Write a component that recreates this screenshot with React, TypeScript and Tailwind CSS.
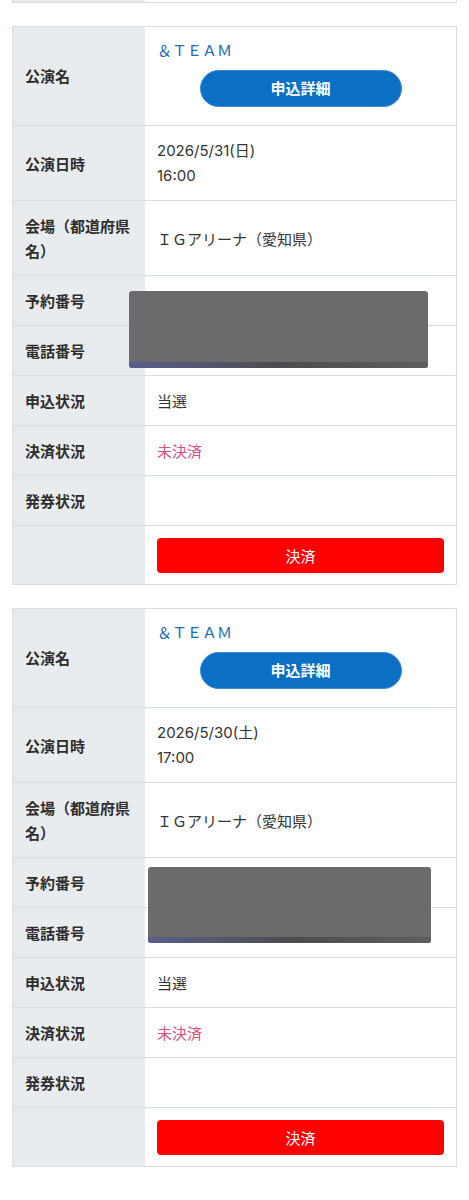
import React from 'react';

type Ticket = {
  title: string;
  date: string;
  time: string;
  venue: string;
  status: string;
  payment: string;
  mask: { left: number; top: number; width: number; height: number };
};

const tickets: Ticket[] = [
  {
    title: '＆ＴＥＡＭ',
    date: '2026/5/31(日)',
    time: '16:00',
    venue: 'ＩＧアリーナ（愛知県）',
    status: '当選',
    payment: '未決済',
    mask: { left: 116, top: 264, width: 299, height: 77 },
  },
  {
    title: '＆ＴＥＡＭ',
    date: '2026/5/30(土)',
    time: '17:00',
    venue: 'ＩＧアリーナ（愛知県）',
    status: '当選',
    payment: '未決済',
    mask: { left: 135, top: 258, width: 283, height: 76 },
  },
];

const Row: React.FC<{ label?: string; h: string; children?: React.ReactNode; last?: boolean }> = ({ label, h, children, last }) => (
  <div className={`grid grid-cols-[132px_1fr] ${last ? '' : 'border-b border-[#d8dfe3]'} ${h}`}>
    <div className="bg-[#e9ecee] px-3 flex items-center font-bold text-[15px] leading-[25px] text-[#2e2e2e]">
      {label}
    </div>
    <div className="px-3 flex items-center text-[15px] leading-[25px] text-[#333]">{children}</div>
  </div>
);

const TicketTable: React.FC<{ t: Ticket }> = ({ t }) => (
  <div className="relative border border-[#d8dfe3]">
    <div className="grid grid-cols-[132px_1fr] border-b border-[#d8dfe3] h-[99px]">
      <div className="bg-[#e9ecee] px-3 flex items-center font-bold text-[15px] text-[#2e2e2e]">公演名</div>
      <div className="px-3 pt-3 flex flex-col">
        <div className="text-[15px] leading-[22px] text-[#1b6cb5]">{t.title}</div>
        <button className="mt-[9px] mx-auto w-[202px] h-[37px] rounded-full bg-[#0b6fc4] border border-[#3f8bd4] text-white font-bold text-[15px]">
          申込詳細
        </button>
      </div>
    </div>
    <Row label="公演日時" h="h-[75px]">
      <div className="font-['Inter','Noto_Sans_CJK_JP',sans-serif]">
        <div>{t.date}</div>
        <div>{t.time}</div>
      </div>
    </Row>
    <Row label="会場（都道府県名）" h="h-[75px]">
      {t.venue}
    </Row>
    <Row label="予約番号" h="h-[50px]" />
    <Row label="電話番号" h="h-[50px]" />
    <Row label="申込状況" h="h-[50px]">
      {t.status}
    </Row>
    <Row label="決済状況" h="h-[50px]">
      <span className="text-[#db4f82]">{t.payment}</span>
    </Row>
    <Row label="発券状況" h="h-[50px]" />
    <Row h="h-[58px]" last>
      <button className="w-full h-[35px] rounded-[4px] bg-[#ff0000] text-white text-[15px]">決済</button>
    </Row>

    {/* redaction */}
    <div
      className="absolute rounded-[3px] bg-[#6b6b6d] overflow-hidden"
      style={{ left: t.mask.left, top: t.mask.top, width: t.mask.width, height: t.mask.height }}
    >
      <div className="absolute left-0 right-0 bottom-0 h-[6px] bg-gradient-to-r from-[#5a5f8a] via-[#4c4c4e] to-[#5e5e60]" />
    </div>
  </div>
);

export default function App() {
  return (
    <div className="bg-white min-h-[1200px] px-3 font-['Noto_Sans_CJK_JP','Noto_Sans',sans-serif]">
      <div className="grid grid-cols-[132px_1fr] h-[3px] border-x border-b border-[#d8dfe3]">
        <div className="bg-[#e9ecee]" />
        <div />
      </div>
      <div className="mt-[23px] flex flex-col gap-[23px]">
        {tickets.map((t, i) => (
          <TicketTable key={i} t={t} />
        ))}
      </div>
    </div>
  );
}
